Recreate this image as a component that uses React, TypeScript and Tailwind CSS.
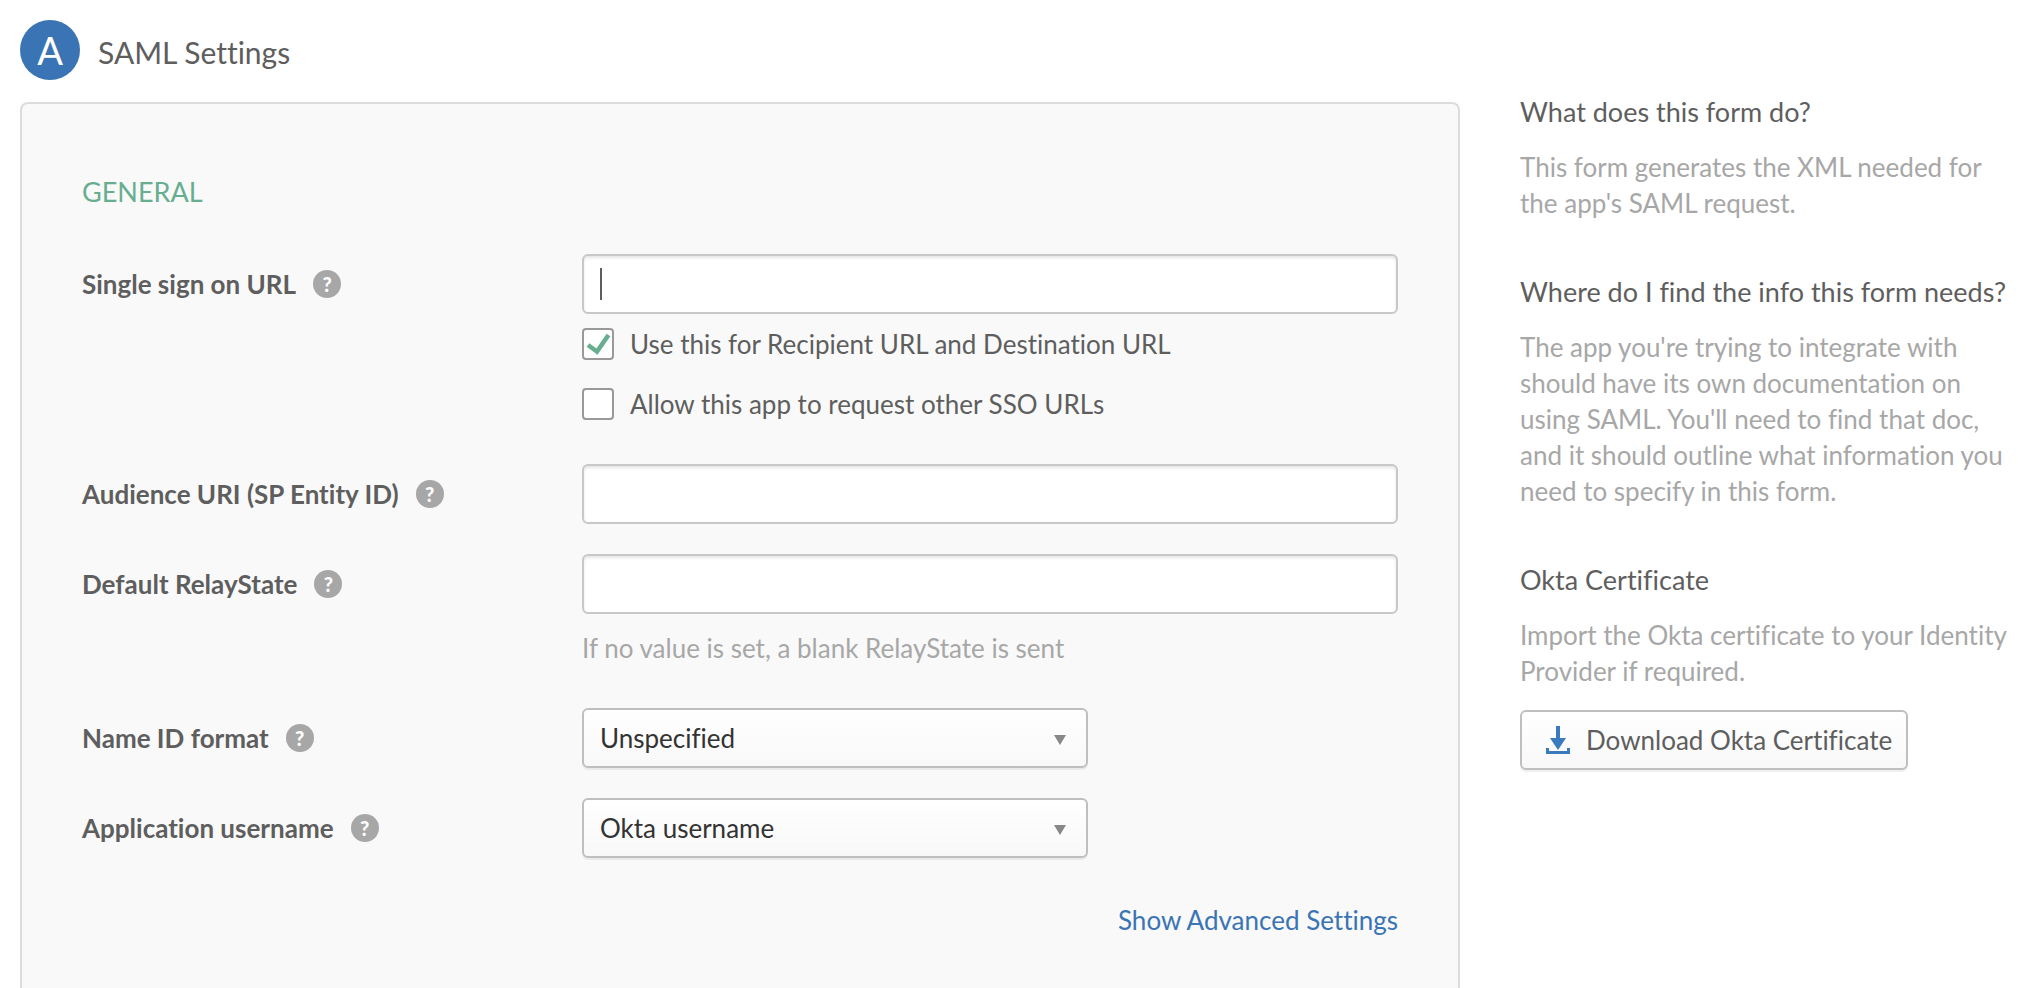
import * as React from "react";

const HELP_SECTIONS = [
  {
    title: "What does this form do?",
    body: "This form generates the XML needed for the app's SAML request.",
  },
  {
    title: "Where do I find the info this form needs?",
    body: "The app you're trying to integrate with should have its own documentation on using SAML. You'll need to find that doc, and it should outline what information you need to specify in this form.",
  },
  {
    title: "Okta Certificate",
    body: "Import the Okta certificate to your Identity Provider if required.",
  },
];

function HelpButton({ topic }: { topic: string }) {
  return (
    <button
      type="button"
      aria-label={`Help: ${topic}`}
      className="flex size-7 shrink-0 items-center justify-center rounded-full bg-[#a7a7a7] text-[20px] leading-7 font-black text-white"
    >
      ?
    </button>
  );
}

function FieldRow({ id, label, children }: { id: string; label: string; children: React.ReactNode }) {
  return (
    <div className="flex">
      <div className="flex h-[60px] w-[500px] shrink-0 items-center gap-[17px]">
        <label htmlFor={id} className="font-bold">
          {label}
        </label>
        <HelpButton topic={label} />
      </div>
      <div className="min-w-0 flex-1">{children}</div>
    </div>
  );
}

function TextField({ id, caret = false }: { id: string; caret?: boolean }) {
  return (
    <div className="relative">
      <input
        id={id}
        type="text"
        className="block h-[60px] w-full rounded-md border-2 border-[#c8c8c8] bg-white px-4 caret-transparent shadow-[inset_0_2px_3px_rgba(0,0,0,0.1)] outline-none"
      />
      {caret && <span className="absolute top-3.5 left-[18px] h-8 w-0.5 bg-[#5e5e5e]" />}
    </div>
  );
}

function CheckField({ label, defaultChecked = false }: { label: string; defaultChecked?: boolean }) {
  return (
    <label className="flex items-center gap-4 leading-8">
      <span className="grid size-8 shrink-0">
        <input
          type="checkbox"
          defaultChecked={defaultChecked}
          className="peer col-start-1 row-start-1 size-8 appearance-none rounded-sm border-2 border-[#999] bg-white"
        />
        <svg
          viewBox="0 0 32 32"
          fill="none"
          className="pointer-events-none invisible col-start-1 row-start-1 size-8 peer-checked:visible"
        >
          <path d="M6 17 15 23.5 26.5 7" stroke="#67ae91" strokeWidth="4.5" />
        </svg>
      </span>
      {label}
    </label>
  );
}

function SelectField({ id, options }: { id: string; options: string[] }) {
  return (
    <div className="relative w-[506px]">
      <select
        id={id}
        className="block h-[60px] w-full appearance-none rounded-md border-2 border-[#bfbfbf] bg-linear-to-b from-white to-[#f8f8f8] px-4 text-[#333] shadow-[0_2px_0_rgba(0,0,0,0.06)]"
      >
        {options.map((option) => (
          <option key={option}>{option}</option>
        ))}
      </select>
      <svg viewBox="0 0 12 10" className="pointer-events-none absolute top-[27px] right-[22px] h-2.5 w-3">
        <path d="M0 0h12L6 10z" fill="#888" />
      </svg>
    </div>
  );
}

function DownloadIcon() {
  return (
    <svg viewBox="0 0 24 28" fill="#3a7bbf" className="h-7 w-6 shrink-0">
      <path d="M10 0h4v12h6l-8 12-8-12h6z" />
      <path d="M0 22h3v3h18v-3h3v6H0z" />
    </svg>
  );
}

export default function App() {
  return (
    <div className="flex min-h-screen flex-col bg-white pl-5 font-['Lato',sans-serif] text-[26px] leading-9 text-[#5e5e5e] [font-variant-ligatures:none]">
      <header className="flex items-center gap-[18px] pt-5 pb-[22px]">
        <span className="flex size-[60px] items-center justify-center rounded-full bg-[#3a74b5] text-[38px] text-white">
          A
        </span>
        <h1 className="pt-1 text-[30px]">SAML Settings</h1>
      </header>

      <div className="flex flex-1 gap-[60px]">
        <form className="min-w-0 flex-1 rounded-t-lg border-2 border-b-0 border-[#dcdcdc] bg-[#f9f9f9] px-[60px] pt-[70px]">
          <h2 className="mb-11 text-[27px] text-[#67ae91]">GENERAL</h2>

          <div className="flex flex-col gap-[30px]">
            <FieldRow id="sso-url" label="Single sign on URL">
              <TextField id="sso-url" caret />
              <div className="flex flex-col gap-7 py-3.5">
                <CheckField label="Use this for Recipient URL and Destination URL" defaultChecked />
                <CheckField label="Allow this app to request other SSO URLs" />
              </div>
            </FieldRow>

            <FieldRow id="audience" label="Audience URI (SP Entity ID)">
              <TextField id="audience" />
            </FieldRow>

            <FieldRow id="relay-state" label="Default RelayState">
              <TextField id="relay-state" />
              <p className="pt-4 pb-3 text-[#a7a7a7]">If no value is set, a blank RelayState is sent</p>
            </FieldRow>

            <FieldRow id="name-id" label="Name ID format">
              <SelectField id="name-id" options={["Unspecified", "EmailAddress", "Persistent", "Transient"]} />
            </FieldRow>

            <FieldRow id="app-username" label="Application username">
              <SelectField id="app-username" options={["Okta username", "Email", "Custom"]} />
            </FieldRow>
          </div>

          <div className="mt-11 text-right">
            <a href="#advanced" className="text-[#3a74b5]">
              Show Advanced Settings
            </a>
          </div>
        </form>

        <aside className="-mt-2 w-[512px] shrink-0">
          {HELP_SECTIONS.map((section) => (
            <section key={section.title} className="pb-[53px]">
              <h3 className="text-[27px]">{section.title}</h3>
              <p className="mt-[19px] pr-4 text-[#a7a7a7]">{section.body}</p>
            </section>
          ))}
          <button
            type="button"
            className="-mt-8 flex h-[60px] items-center gap-4 rounded-md border-2 border-[#bfbfbf] bg-linear-to-b from-white to-[#f8f8f8] pr-3.5 pl-6 shadow-[0_2px_0_rgba(0,0,0,0.06)]"
          >
            <DownloadIcon />
            Download Okta Certificate
          </button>
        </aside>
      </div>
    </div>
  );
}
